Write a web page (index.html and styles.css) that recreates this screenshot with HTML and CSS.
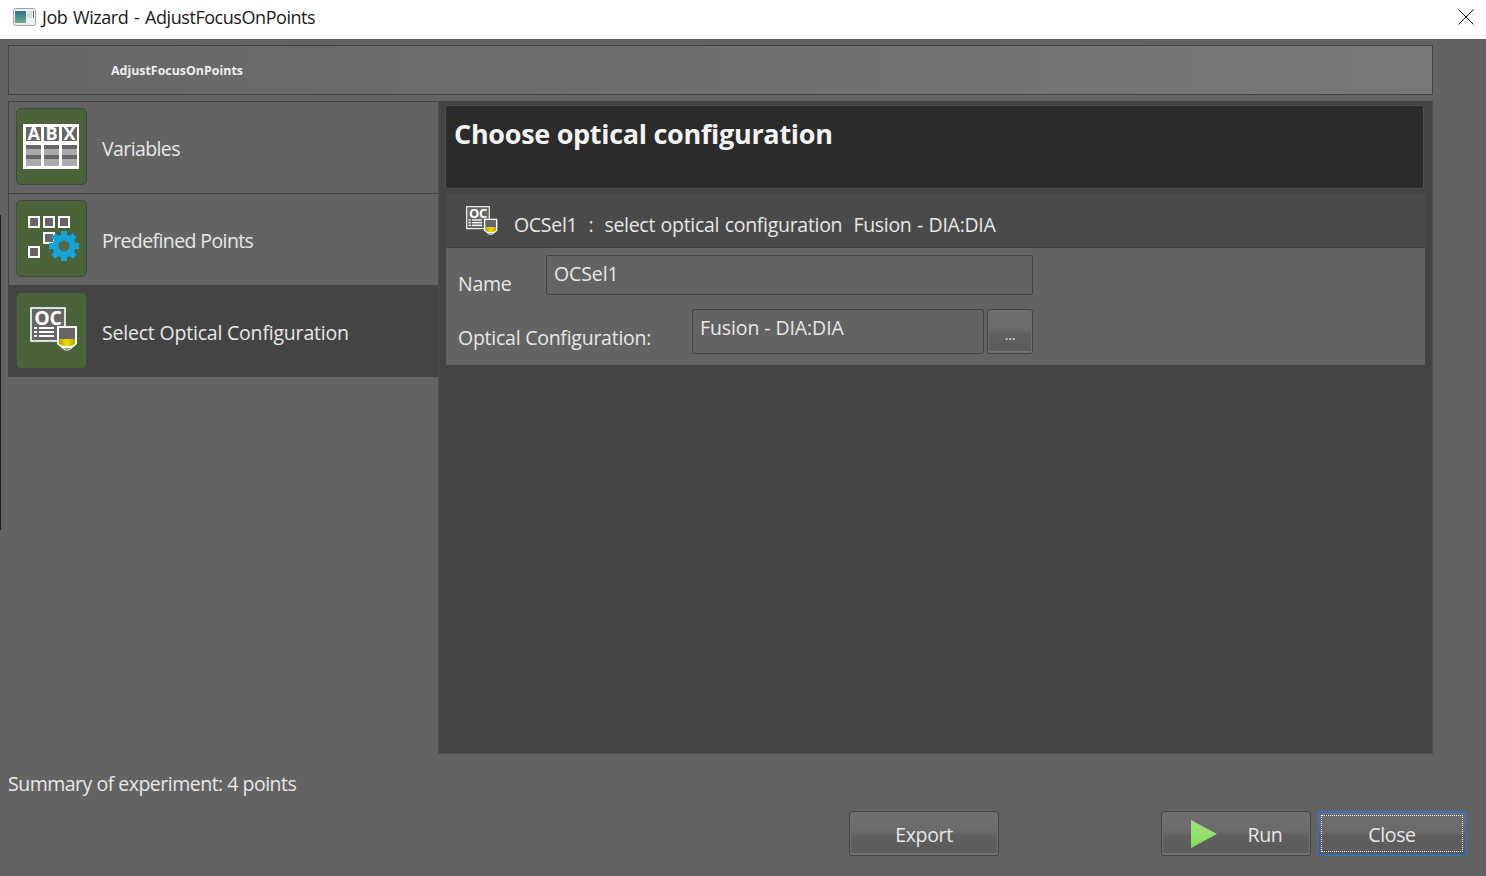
FILE: index.html
```html
<!DOCTYPE html>
<html lang="en">

<head>
	<meta charset="utf-8" />
	<title>Job Wizard - AdjustFocusOnPoints</title>
	<link rel="stylesheet" href="styles.css">
</head>

<body>
	<div class="titlebar">
		<svg class="app-icon" width="23" height="18" viewBox="0 0 23 18">
			<rect x="0.5" y="0.5" width="22" height="17" rx="2" fill="#f0f2f2" stroke="#9aa3a8" />
			<defs>
				<linearGradient id="app-fill" x1="0" y1="0" x2="0" y2="1">
					<stop offset="0" stop-color="#2f6f92" />
					<stop offset="1" stop-color="#6fb08a" />
				</linearGradient>
			</defs>
			<rect x="2" y="3" width="11" height="12" fill="url(#app-fill)" />
			<rect x="14" y="3" width="5" height="7" fill="#d8dcdc" />
			<rect x="20" y="3" width="1" height="7" fill="#5a6a70" />
		</svg>
		<span class="title-text">Job Wizard - AdjustFocusOnPoints</span>
		<svg class="close-x" width="16" height="16" viewBox="0 0 16 16">
			<path d="M0.5 0.5L15.5 15.5M15.5 0.5L0.5 15.5" stroke="#111" stroke-width="1" fill="none" />
		</svg>
	</div>

	<div class="edge-sliver"></div>

	<div class="content">
		<div class="job-name"><b>AdjustFocusOnPoints</b></div>

		<div class="wizard">
			<div class="steps">
				<div class="step">
					<div class="tile">
						<svg class="abx-icon" width="56" height="53" viewBox="0 -4 56 53">
							<rect x="0" y="0" width="56" height="45" fill="#fff" />
							<rect x="3" y="3" width="15" height="14" fill="#666" />
							<rect x="21" y="3" width="15" height="14" fill="#666" />
							<rect x="39" y="3" width="15" height="14" fill="#666" />
							<text x="10.5" y="16" class="abx">A</text>
							<text x="28.5" y="16" class="abx">B</text>
							<text x="46.5" y="16" class="abx">X</text>
							<g fill="#aaa">
								<rect x="3" y="21" width="15" height="21" />
								<rect x="21" y="21" width="15" height="21" />
								<rect x="39" y="21" width="15" height="21" />
							</g>
							<g fill="#666">
								<rect x="3" y="21" width="51" height="4" />
								<rect x="3" y="31" width="51" height="4" />
							</g>
							<rect x="18" y="21" width="3" height="21" fill="#fff" />
							<rect x="36" y="21" width="3" height="21" fill="#fff" />
						</svg>
					</div>
					<span class="tight">Variables</span>
				</div>
				<div class="step">
					<div class="tile">
						<svg class="gear-icon" width="51" height="45" viewBox="0 0 51 45">
							<g fill="#666" stroke="#fff" stroke-width="2">
								<rect x="1" y="1" width="10" height="10" />
								<rect x="16" y="1" width="10" height="10" />
								<rect x="31" y="1" width="10" height="10" />
								<rect x="16" y="17" width="10" height="10" />
								<rect x="1" y="31" width="10" height="10" />
							</g>
							<g fill="#13a4dd" transform="translate(36 30)">
								<circle r="11.5" />
								<rect x="-3" y="-15" width="6" height="30" />
								<rect x="-3" y="-15" width="6" height="30" transform="rotate(45)" />
								<rect x="-3" y="-15" width="6" height="30" transform="rotate(90)" />
								<rect x="-3" y="-15" width="6" height="30" transform="rotate(135)" />
								<circle r="5.5" fill="#566a4a" />
							</g>
						</svg>
					</div>
					<span class="tight">Predefined Points</span>
				</div>
				<div class="step active">
					<div class="tile">
						<svg class="oc-icon" width="48" height="45" viewBox="0 0 48 45">
							<use href="#oc-icon" />
						</svg>
					</div>
					<span>Select Optical Configuration</span>
				</div>
			</div>

			<div class="panel">
				<div class="panel-title">Choose optical configuration</div>
				<div class="section-head">
					<svg class="small-oc" width="32" height="30" viewBox="0 0 48 45">
						<use href="#oc-icon" />
					</svg>
					<span>OCSel1&nbsp; :&nbsp; select optical configuration&nbsp; Fusion - DIA:DIA</span>
				</div>
				<div class="form">
					<div class="form-row name-row">
						<label>Name</label>
						<div class="field name-field">OCSel1</div>
					</div>
					<div class="form-row conf-row">
						<label>Optical Configuration:</label>
						<div class="field conf-field">Fusion - DIA:DIA</div>
						<div class="btn dots">...</div>
					</div>
				</div>
			</div>
		</div>

		<div class="summary">Summary of experiment: 4 points</div>

		<div class="actions">
			<div class="btn export">Export</div>
			<div class="btn run">
				<svg width="28" height="30" viewBox="0 0 28 30">
					<defs>
						<linearGradient id="run-fill" x1="0" y1="0" x2="0" y2="1">
							<stop offset="0" stop-color="#a2e27f" />
							<stop offset="1" stop-color="#82de5c" />
						</linearGradient>
					</defs>
					<path d="M1 1L27 15L1 29z" fill="url(#run-fill)" />
				</svg>
				<span>Run</span>
			</div>
			<div class="btn close"><span class="close-inner">Close</span></div>
		</div>
	</div>

	<svg class="defs-only" width="0" height="0">
		<defs>
			<linearGradient id="oc-yellow" x1="0" y1="0" x2="1" y2="0">
				<stop offset="0" stop-color="#b5a400" />
				<stop offset="0.5" stop-color="#f2dc00" />
				<stop offset="1" stop-color="#b5a400" />
			</linearGradient>
			<g id="oc-icon">
				<rect x="1" y="1" width="34" height="33" fill="#666" stroke="#fff" stroke-width="1.6" />
				<text x="18" y="18" class="oc">OC</text>
				<g fill="#fff">
					<rect x="4" y="20" width="3" height="2" />
					<rect x="4" y="24" width="3" height="2" />
					<rect x="4" y="28" width="3" height="2" />
					<rect x="9" y="20" width="15" height="2" />
					<rect x="9" y="24" width="15" height="2" />
					<rect x="9" y="28" width="15" height="2" />
				</g>
				<path d="M27 19H47V37L41 42Q37 45 33 42L27 37z" fill="#fff" />
				<path d="M29 21H45V32H29z" fill="#666" />
				<path d="M29 32H45V37L41 39H33L29 37z" fill="url(#oc-yellow)" />
				<path d="M33 41H41L37 43.5z" fill="#999" />
			</g>
		</defs>
	</svg>
</body>

</html>
```

FILE: styles.css
```css
html,
body {
	margin: 0;
	height: 100%;
}

body {
	width: 1486px;
	height: 876px;
	overflow: hidden;
	background: #636363;
	color: #e8e8e8;
	font-family: "Open Sans", "Noto Sans", sans-serif;
	font-size: 19.5px;
	display: flex;
	flex-direction: column;
}

.titlebar {
	height: 39px;
	background: #fff;
	color: #1a1a1a;
	display: flex;
	align-items: center;
	padding: 0 12px 5px 13px;
	box-sizing: border-box;
	font-size: 18px;
}

.app-icon {
	margin-right: 6px;
}

.title-text {
	flex: 1;
	letter-spacing: -0.45px;
	word-spacing: 1.5px;
}

/* dark sliver of whatever sits behind the window */
.edge-sliver {
	position: absolute;
	left: 0;
	top: 215px;
	width: 1px;
	height: 315px;
	background: #1c1c1c;
}

.content {
	flex: 1;
	padding: 6px 53px 0 8px;
	display: flex;
	flex-direction: column;
}

.job-name {
	height: 50px;
	box-sizing: border-box;
	border: 1px solid #444;
	background: linear-gradient(to right, #666, #787878);
	display: flex;
	align-items: center;
	padding-left: 102px;
	font-size: 12.4px;
	color: #eee;
}

.wizard {
	margin-top: 6px;
	height: 653px;
	display: flex;
}

.steps {
	width: 430px;
	flex: none;
}

.step {
	height: 92px;
	box-sizing: border-box;
	border-top: 1px solid #444;
	border-left: 1px solid #444;
	display: flex;
	align-items: center;
	padding: 0 0 2px 7px;
	gap: 15px;
	letter-spacing: -0.2px;
}

.step span {
	margin-top: 4px;
}

.step span.tight {
	letter-spacing: -0.6px;
}

.step:nth-child(3) {
	border-bottom: 1px solid #444;
	padding-bottom: 1px;
}

.step.active {
	background: #444;
}

.tile {
	width: 71px;
	height: 77px;
	box-sizing: border-box;
	border: 1px solid #444;
	border-radius: 5px;
	background: #4b6339;
	display: flex;
	align-items: center;
	justify-content: center;
}

.abx-icon {
	margin-right: 1px;
}

.gear-icon {
	margin-left: 4px;
}

.oc-icon {
	margin: 0 0 2px 4px;
}

.abx {
	font-family: "Open Sans", sans-serif;
	font-size: 18px;
	font-weight: 700;
	fill: #fff;
	text-anchor: middle;
}

.oc {
	font-family: "Open Sans", sans-serif;
	font-size: 19.5px;
	font-weight: 700;
	fill: #fff;
	text-anchor: middle;
}

.panel {
	flex: 1;
	background: #444;
	border: 1px solid #4f4f4f;
	border-top-color: #444;
	box-sizing: border-box;
	padding: 3px 7px 0 6px;
}

.panel-title {
	height: 84px;
	box-sizing: border-box;
	background: #2b2b2b;
	border: 1px solid #4f4f4f;
	border-radius: 3px;
	margin-right: 1px;
	padding: 9px 8px;
	font-size: 27px;
	font-weight: 700;
	line-height: 38px;
	color: #f4f4f4;
	letter-spacing: -0.3px;
}

.section-head {
	margin-top: 5px;
	height: 54px;
	box-sizing: border-box;
	margin-left: 1px;
	background: #4a4a4a;
	border-bottom: 1px solid #3f3f3f;
	display: flex;
	align-items: center;
	padding: 8px 0 0 20px;
	gap: 16px;
	letter-spacing: -0.3px;
	word-spacing: 0.8px;
}

.small-oc {
	margin-top: -8px;
}

.form {
	margin-left: 1px;
	height: 117px;
	background: #636363;
	box-sizing: border-box;
	padding: 7px 0 0 12px;
}

.form-row {
	display: flex;
	letter-spacing: -0.25px;
}

.form-row label {
	padding-top: 15px;
	line-height: 28px;
}

.name-row {
	height: 54px;
}

.name-row label {
	width: 88px;
}

.conf-row label {
	width: 234px;
}

.field {
	box-sizing: border-box;
	border: 1px solid #444;
	border-radius: 2px;
	padding: 4px 7px;
	line-height: 28px;
	letter-spacing: -0.1px;
}

.name-field {
	width: 487px;
	height: 40px;
}

.conf-field {
	width: 292px;
	height: 45px;
}

.btn {
	box-sizing: border-box;
	border: 1px solid #444;
	border-radius: 3px;
	box-shadow: inset 0 0 0 1px #6f6f6f, inset 0 -1px 0 1px #747474;
	background: linear-gradient(to bottom, #707070 0%, #6a6a6a 45%, #5f5f5f 55%, #5a5a5a 100%);
	display: flex;
	align-items: center;
	justify-content: center;
}

.dots {
	width: 46px;
	height: 45px;
	margin-left: 3px;
	font-size: 14px;
	padding-top: 6px;
}

.summary {
	margin-top: 16px;
	line-height: 28px;
	letter-spacing: -0.5px;
}

.actions {
	margin-top: 13px;
	margin-right: -34px;
	display: flex;
	justify-content: flex-end;
	gap: 6px;
	letter-spacing: -0.35px;
}

.actions .btn {
	width: 150px;
	height: 45px;
	padding-top: 2px;
}

.actions .export {
	margin-right: 156px;
}

.actions .run {
	gap: 30px;
}

.actions .run svg {
	margin-top: -2px;
}

.actions .close {
	border-color: #3573c0;
	box-shadow: inset 0 0 0 1px #3d6aa0;
	padding: 3px;
}

.close-inner {
	flex: 1;
	align-self: stretch;
	display: flex;
	align-items: center;
	justify-content: center;
	border: 1px dotted #fff;
	padding-top: 2px;
}

.defs-only {
	position: absolute;
}
```
